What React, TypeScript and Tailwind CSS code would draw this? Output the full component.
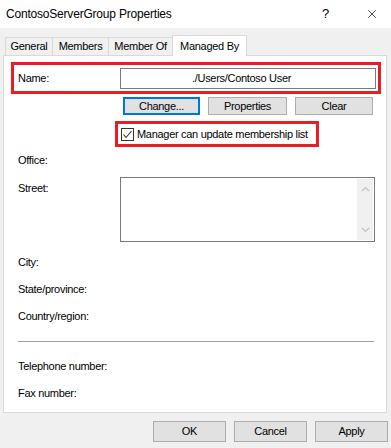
import { X } from 'lucide-react'

const TABS = [
  { label: 'General', w: 'w-[47px]' },
  { label: 'Members', w: 'w-[56px]' },
  { label: 'Member Of', w: 'w-[64px]' },
]

export default function App() {
  return (
    <div className="w-[391px] h-[448px] bg-[#f0f0f0] flex flex-col font-['Liberation_Sans',Arial,sans-serif] text-black text-[11px] tracking-[-0.3px] overflow-hidden">
      {/* title bar */}
      <div className="h-[28px] bg-white flex items-center shrink-0">
        <span className="ml-[6px] text-[12px] tracking-[-0.2px]">ContosoServerGroup Properties</span>
        <span className="ml-auto text-[13px] mr-[36px]">?</span>
        <X size={14} strokeWidth={1.2} className="mr-[12px]" />
      </div>

      {/* tab strip */}
      <div className="flex items-end pl-[5px] pt-[7px] h-[27px] shrink-0 relative z-10">
        {TABS.map((t, i) => (
          <div
            key={t.label}
            className={`${t.w} h-[18px] border-[#d9d9d9] border-t border-l ${i === 0 ? '' : ''} flex items-center justify-center bg-[#f0f0f0]`}
          >
            {t.label}
          </div>
        ))}
        <div className="w-[75px] h-[21px] -mb-px bg-white border border-b-0 border-[#d9d9d9] flex items-start justify-center pt-[2px]">
          Managed By
        </div>
      </div>

      <Panel />

      {/* footer buttons */}
      <div className="flex justify-end gap-[8px] pr-[3px] mt-[8px]">
        <Btn label="OK" cls="w-[73px] h-[21px]" />
        <Btn label="Cancel" cls="w-[73px] h-[21px]" />
        <Btn label="Apply" cls="w-[73px] h-[21px]" />
      </div>
    </div>
  )
}

function Panel() {
  return (
    <div className="mx-[3px] mr-[4px] h-[358px] bg-white border border-[#d9d9d9] flex flex-col shrink-0">
      {/* name row */}
      <div className="ml-[7px] mt-[6px] w-[370px] h-[32px] border-[3px] border-[#ed1c24] flex items-center">
        <span className="w-[106px] pl-[4px]">Name:</span>
        <div className="w-[256px] h-[21px] border border-[#7a7a7a] flex items-center pl-[71px]">
          ./Users/Contoso User
        </div>
      </div>

      <div className="flex mt-[3px] ml-[119px]">
        <button className="w-[77px] h-[18px] bg-[#e1e1e1] border-2 border-[#0078d7] flex items-center justify-center">
          Change...
        </button>
        <Btn label="Properties" cls="ml-[8px] w-[79px] h-[18px]" />
        <Btn label="Clear" cls="ml-[8px] w-[78px] h-[18px]" />
      </div>

      <div className="ml-[111px] mt-[6px] w-[204px] h-[26px] border-[3px] border-[#ed1c24] flex items-center pl-[3px]">
        <div className="w-[13px] h-[13px] border border-[#333] bg-white flex items-center justify-center">
          <svg width="11" height="11" viewBox="0 0 11 11">
            <polyline points="1.5,5.5 4,8.5 9.5,2" fill="none" stroke="#333" strokeWidth="1.1" />
          </svg>
        </div>
        <span className="ml-[3px]">Manager can update membership list</span>
      </div>

      <Label text="Office:" mt="mt-[3px]" />

      <div className="flex items-start mt-[7px]">
        <span className="w-[116px] pl-[14px] mt-[4px] leading-[14px]">Street:</span>
        <div className="w-[255px] h-[65px] border border-[#7a7a7a] flex justify-end p-px">
          <div className="w-[16px] h-full bg-[#f0f0f0] flex flex-col items-center justify-between py-[7px]">
            <svg width="9" height="6" viewBox="0 0 9 6">
              <polyline points="1,5 4.5,1.5 8,5" fill="none" stroke="#c2c2c2" strokeWidth="1.2" />
            </svg>
            <svg width="9" height="6" viewBox="0 0 9 6">
              <polyline points="1,1 4.5,4.5 8,1" fill="none" stroke="#c2c2c2" strokeWidth="1.2" />
            </svg>
          </div>
        </div>
      </div>

      <Label text="City:" mt="mt-[10px]" />
      <Label text="State/province:" mt="mt-[7px]" />
      <Label text="Country/region:" mt="mt-[7px]" />

      <div className="ml-[14px] w-[356px] h-px bg-[#a0a0a0] mt-[15px]" />

      <Label text="Telephone number:" mt="mt-[14px]" />
      <Label text="Fax number:" mt="mt-[7px]" />
    </div>
  )
}

function Label({ text, mt }: { text: string; mt: string }) {
  return (
    <div className={`h-[20px] flex items-center pl-[14px] ${mt}`}>
      <span>{text}</span>
    </div>
  )
}

function Btn({ label, cls }: { label: string; cls: string }) {
  return (
    <button className={`${cls} bg-[#e1e1e1] border border-[#adadad] flex items-center justify-center`}>
      {label}
    </button>
  )
}
